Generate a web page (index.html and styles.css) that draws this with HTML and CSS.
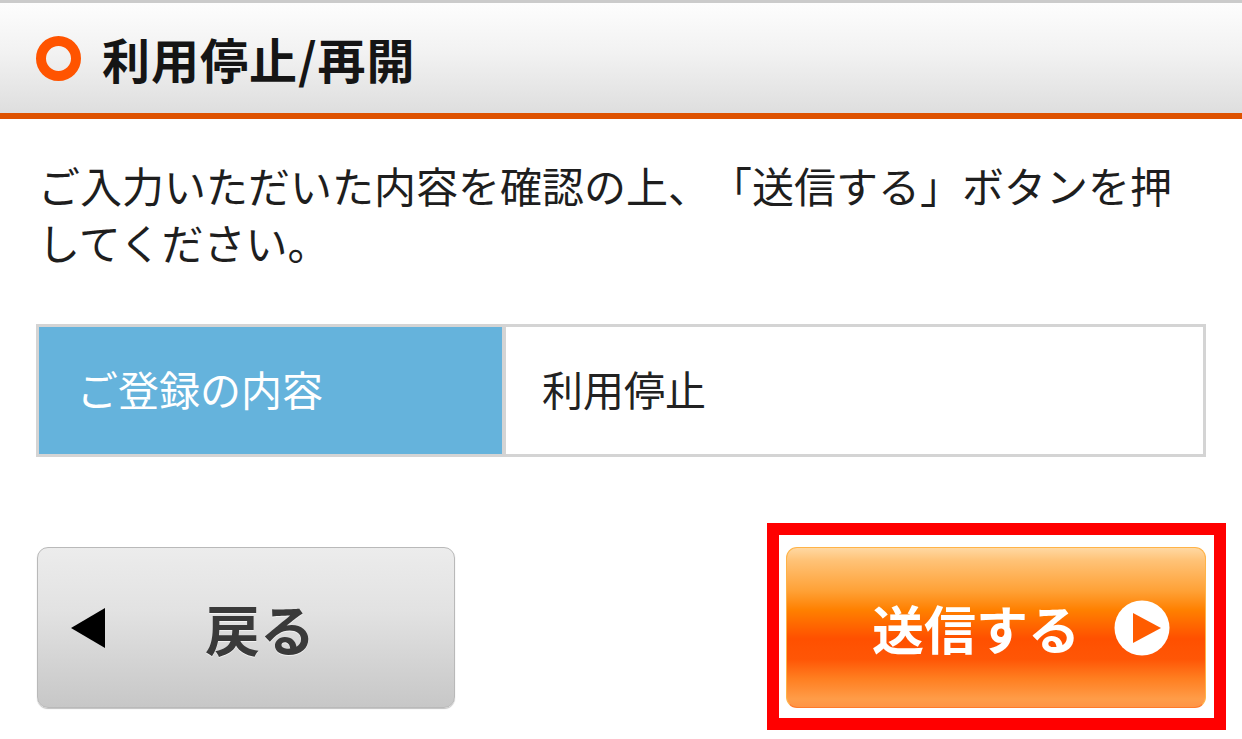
FILE: index.html
```html
<!DOCTYPE html>
<html lang="ja">
<head>
<meta charset="utf-8">
<title>利用停止/再開</title>
<link rel="stylesheet" href="styles.css">
</head>
<body>
<header class="page-header">
  <span class="ring"></span>
  <h1 class="title">利用停止/再開</h1>
</header>
<main class="content">
  <p class="lead">ご入力いただいた内容を確認の上、「送信する」ボタンを押してください。</p>
  <div class="summary">
    <div class="summary-label">ご登録の内容</div>
    <div class="summary-value">利用停止</div>
  </div>
  <div class="actions">
    <button class="btn btn-back" type="button">
      <svg class="back-arrow" width="34" height="40" viewBox="0 0 34 40"><polygon points="34,0 34,40 0,20" fill="#000"/></svg>
      <span class="btn-back-label">戻る</span>
    </button>
    <div class="highlight">
      <button class="btn btn-send" type="submit">
        <span class="btn-send-label">送信する</span>
        <svg class="send-icon" width="56" height="56" viewBox="0 0 56 56"><circle cx="28" cy="28" r="27.5" fill="#fff"/><polygon points="19,13 19,43 47,28" fill="#ff5c00"/></svg>
      </button>
    </div>
  </div>
</main>
</body>
</html>
```

FILE: styles.css
```css
* { box-sizing: border-box; }
html, body { margin: 0; padding: 0; background: #fff; }
body {
  font-family: "Noto Sans CJK JP", "Noto Sans", sans-serif;
  color: #1e1e1e;
  width: 1242px;
  height: 739px;
  overflow: hidden;
  text-spacing-trim: space-all;
}
.page-header {
  display: flex;
  align-items: center;
  height: 119px;
  border-top: 3px solid #cbcbcb;
  border-bottom: 6px solid #de5200;
  background: linear-gradient(to bottom, #fdfdfd 0%, #f2f2f2 45%, #dedede 100%);
  padding-left: 36px;
}
.ring {
  display: block;
  width: 45px;
  height: 45px;
  border: 10px solid #ff5400;
  border-radius: 50%;
  flex: none;
}
.title {
  margin: 0 0 0 21px;
  font-size: 48px;
  font-weight: 700;
  color: #151515;
  line-height: 1;
  letter-spacing: 1px;
}
.content {
  padding: 0 36px;
}
.lead {
  margin: 37px 0 0;
  font-size: 42px;
  line-height: 57px;
  color: #1e1e1e;
  padding-left: 2px;
  text-spacing-trim: space-all;
}
.summary {
  display: grid;
  grid-template-columns: 467px 1fr;
  margin-top: 54px;
  border: 3px solid #d4d4d4;
  height: 133px;
}
.summary-label {
  background: #65b3dc;
  color: #fff;
  border-right: 4px solid #d4d4d4;
  display: flex;
  align-items: center;
  padding-left: 38px;
  padding-bottom: 5px;
  font-size: 41px;
}
.summary-value {
  display: flex;
  align-items: center;
  padding-left: 36px;
  padding-bottom: 5px;
  font-size: 41px;
  color: #222;
}
.actions {
  display: flex;
  justify-content: space-between;
  margin-top: 90px;
  padding-left: 1px;
}
.btn {
  font-family: inherit;
  height: 161px;
  border-radius: 11px;
  display: flex;
  align-items: center;
  padding: 0;
  cursor: pointer;
}
.btn-back {
  width: 418px;
  border: 1px solid #b9b9b9;
  background: linear-gradient(to bottom, #ececec 0%, #e2e2e2 40%, #d2d2d2 75%, #c7c7c7 100%);
  box-shadow: 0 1px 1px rgba(0,0,0,0.25);
  padding-left: 33px;
}
.back-arrow { flex: none; }
.btn-back-label {
  margin-left: 100px;
  font-size: 55px;
  font-weight: 700;
  color: #3a3a3a;
  text-shadow: 0 1px 0 rgba(255,255,255,0.6);
  line-height: 1;
}
.highlight {
  position: relative;
}
.highlight::after {
  content: "";
  position: absolute;
  top: -24px;
  left: -19px;
  right: -20px;
  bottom: -22px;
  border: 12px solid #ff0000;
  pointer-events: none;
}
.btn-send {
  width: 420px;
  border: 1px solid #ffb347;
  border-bottom-color: #ff7a2a;
  background: linear-gradient(to bottom, #ffd8a2 0%, #ffc276 8%, #ffa136 27%, #ff8000 39%, #ff5000 57%, #ff5606 70%, #ff7e20 82%, #ff9c48 95%, #ff9444 100%);
  padding-left: 85px;
}
.btn-send-label {
  font-size: 52px;
  font-weight: 700;
  color: #fff;
  line-height: 1;
}
.send-icon {
  flex: none;
  margin-left: 34px;
}
```
